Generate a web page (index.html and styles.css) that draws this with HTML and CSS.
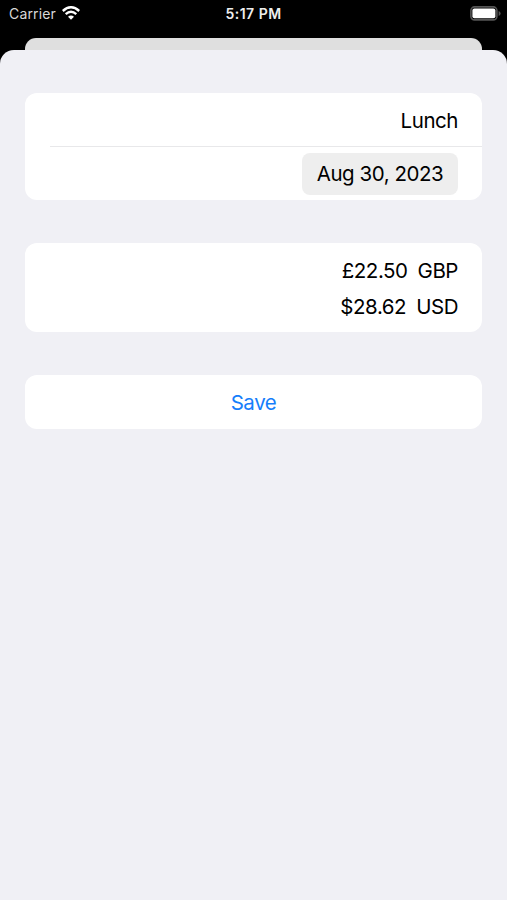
FILE: index.html
```html
<!DOCTYPE html>
<html lang="en">
<head>
<meta charset="utf-8">
<meta name="viewport" content="width=device-width">
<title>Expense</title>
<link rel="stylesheet" href="styles.css">
</head>
<body>
<header class="status">
  <div class="carrier"><span>Carrier</span>
    <svg class="wifi" width="18" height="14" viewBox="0 0 18 14" fill="none" stroke="#fff">
      <path d="M.8 5Q9-2.400 17.200 5" stroke-width="2.5"/>
      <path d="M3.700 8.200Q9 3.500 14.300 8.200" stroke-width="2.4"/>
      <path d="M6 10.700Q9 8.300 12 10.700L9 13.700Z" fill="#fff" stroke="none"/>
    </svg>
  </div>
  <time class="clock">5:17 PM</time>
  <svg class="battery" width="31" height="15" viewBox="0 0 31 15">
    <rect x=".9" y=".9" width="26" height="13" rx="3.6" fill="none" stroke="#555" stroke-width="1.6"/>
    <rect x="2.4" y="2.5" width="23" height="9.8" rx="2" fill="#fff"/>
    <path d="M28.6 5v5q2-.8 2-2.500t-2-2.500z" fill="#555"/>
  </svg>
</header>
<div class="back-sheet"></div>
<main class="sheet">
  <section class="card details">
    <div class="row title">Lunch</div>
    <div class="row date"><button class="chip">Aug 30, 2023</button></div>
  </section>
  <section class="card amounts">
    <div class="amount"><span>£22.50</span><span>GBP</span></div>
    <div class="amount"><span>$28.62</span><span>USD</span></div>
  </section>
  <button class="card save">Save</button>
</main>
</body>
</html>
```
FILE: styles.css
```css
* { box-sizing: border-box; }
body {
  margin: 0;
  height: 900px;
  display: flex;
  flex-direction: column;
  overflow: hidden;
  background: #000;
  color: #000;
  font: 20.5px/26px Inter, "Liberation Sans", sans-serif;
  letter-spacing: -.45px;
}
button { border: 0; padding: 0; font: inherit; color: inherit; letter-spacing: inherit; }
.status {
  height: 38px;
  padding: 6px 6px 0 9px;
  display: grid;
  grid-template-columns: 1fr auto 1fr;
  align-items: start;
  color: #fff;
  font-size: 14px;
  line-height: 16px;
}
.carrier { display: flex; gap: 6px; color: #d8d8d8; letter-spacing: .15px; }
.clock { margin-right: 3px; font-weight: 600; font-size: 14px; letter-spacing: .5px; color: #eee; }
.battery { justify-self: end; }
.back-sheet {
  height: 12px;
  margin: 0 25px;
  border-radius: 11px 11px 0 0;
  background: #dfdfdf;
}
.sheet {
  flex: 1;
  padding: 43px 25px 0;
  display: flex;
  flex-direction: column;
  gap: 43px;
  border-radius: 14px 14px 0 0;
  background: #f0f0f5;
}
.card { border-radius: 12px; background: #fff; }
.details { height: 107px; }
.row { display: flex; align-items: center; justify-content: flex-end; padding-right: 24px; }
.title { height: 54px; margin-left: 25px; padding-top: 2px; border-bottom: 1px solid #e8e8ea; }
.date { height: 53px; }
.chip { width: 156px; height: 42px; border-radius: 8px; background: #eee; }
.amounts { height: 89px; padding: 10px 24px 0; }
.amount { height: 36px; line-height: 36px; display: flex; justify-content: flex-end; gap: 10px; }
.save { height: 54px; padding-top: 2px; color: #157efb; }
```
